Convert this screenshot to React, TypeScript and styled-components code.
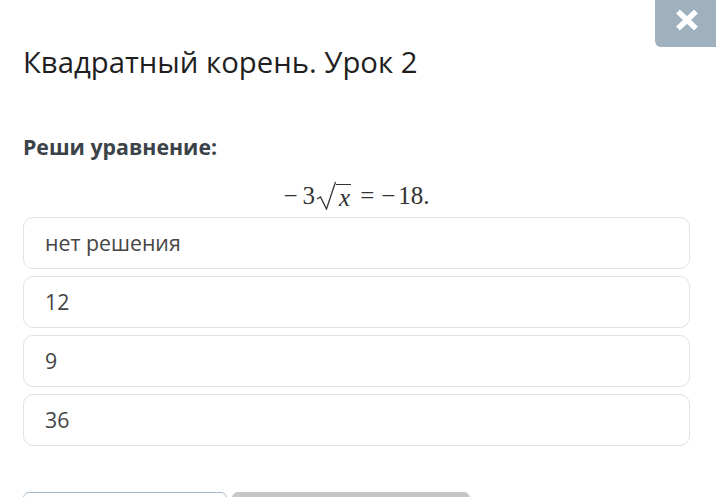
import React from "react";
import styled, { createGlobalStyle } from "styled-components";

const Global = createGlobalStyle`
  html, body { margin: 0; padding: 0; background: #ffffff; }
  body { font-family: "Open Sans", "Noto Sans", sans-serif; overflow: hidden; }
`;

const Page = styled.div`
  position: relative;
  width: 716px;
  height: 497px;
  overflow: hidden;
  padding: 0 26px 0 23px;
  box-sizing: border-box;
`;

const CloseButton = styled.button`
  position: absolute;
  top: 0;
  right: 0;
  width: 61px;
  height: 47px;
  border: none;
  padding: 0;
  background: #9fb1be;
  border-bottom-left-radius: 6px;
  display: flex;
  align-items: center;
  justify-content: center;
  cursor: pointer;
  padding-bottom: 8px;
  padding-left: 2px;
`;

const Title = styled.h1`
  margin: 0;
  padding-top: 42px;
  font-size: 29.3px;
  line-height: 40px;
  font-weight: 400;
  color: #1f1f1f;
`;

const Question = styled.div`
  margin-top: 51px;
  font-size: 21.3px;
  line-height: 28px;
  font-weight: 700;
  color: #3b4248;
`;

const Formula = styled.div`
  display: flex;
  justify-content: center;
  align-items: flex-end;
  margin-top: 17px;
  height: 32px;
  font-family: "Liberation Serif", "DejaVu Serif", serif;
  font-size: 25px;
  color: #333;
`;

const Sym = styled.span<{ $l?: number; $r?: number }>`
  margin-left: ${(p) => p.$l ?? 0}px;
  margin-right: ${(p) => p.$r ?? 0}px;
  line-height: 28px;
`;

const Radical = styled.span`
  display: inline-flex;
  align-items: flex-end;
  margin-left: 1px;
`;

const Radicand = styled.span`
  border-top: 1.3px solid #333;
  font-style: italic;
  padding: 0 1px 0 3px;
  line-height: 25px;
`;

const Options = styled.div`
  display: flex;
  flex-direction: column;
  gap: 7px;
  margin-top: 7px;
`;

const Option = styled.div`
  height: 52px;
  box-sizing: border-box;
  border: 1px solid #e2e2e2;
  border-radius: 10px;
  display: flex;
  align-items: center;
  padding: 0 0 2px 21px;
  font-size: 21.3px;
  color: #454545;
`;

const Footer = styled.div`
  display: flex;
  gap: 5px;
  margin-top: 46px;
`;

const FooterButton = styled.div<{ $filled?: boolean; $w: number }>`
  width: ${(p) => p.$w}px;
  height: 40px;
  box-sizing: border-box;
  border-radius: 6px;
  border: 1px solid ${(p) => (p.$filled ? "#c6c6c6" : "#a9b8c4")};
  background: ${(p) => (p.$filled ? "#c6c6c6" : "#ffffff")};
`;

const options = ["нет решения", "12", "9", "36"];

export default function App() {
  return (
    <Page>
      <Global />
      <CloseButton aria-label="close">
        <svg width="24" height="22" viewBox="0 0 24 22">
          <path
            d="M3 2.5 L21 19.5 M21 2.5 L3 19.5"
            stroke="#ffffff"
            strokeWidth="5.5"
            strokeLinecap="butt"
          />
        </svg>
      </CloseButton>
      <Title>Квадратный корень. Урок 2</Title>
      <Question>Реши уравнение:</Question>
      <Formula>
        <Sym $r={5}>−</Sym>
        <Sym>3</Sym>
        <Radical>
          <svg width="20" height="29" viewBox="0 0 20 29">
            <path d="M1 18 L4.5 16 L10.5 28 L19.5 1" stroke="#333" strokeWidth="1.3" fill="none" />
          </svg>
          <Radicand>x</Radicand>
        </Radical>
        <Sym $l={9} $r={7}>=</Sym>
        <Sym $r={3}>−</Sym>
        <Sym>18.</Sym>
      </Formula>
      <Options>
        {options.map((o) => (
          <Option key={o}>{o}</Option>
        ))}
      </Options>
      <Footer>
        <FooterButton $w={204} />
        <FooterButton $w={238} $filled />
      </Footer>
    </Page>
  );
}
